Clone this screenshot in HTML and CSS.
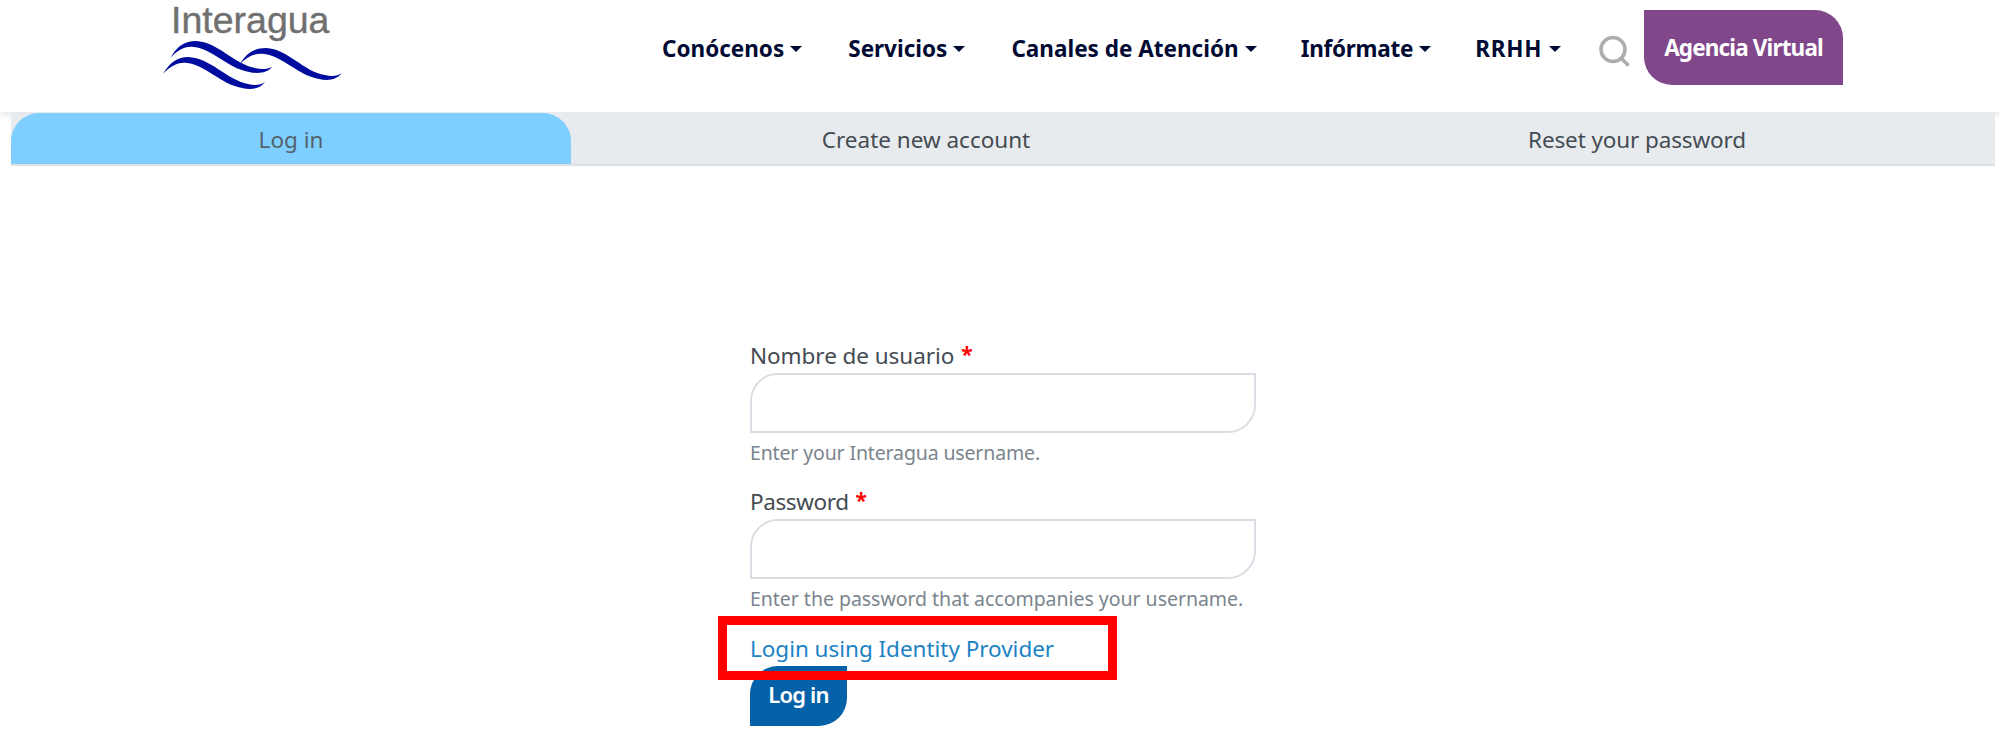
FILE: index.html
```
<!DOCTYPE html>
<html lang="es"><head><meta charset="utf-8"><title>Interagua</title><link rel="stylesheet" href="styles.css"></head>
<body>
<header class="header">
  <a class="brand" aria-label="Interagua">
    <span class="brand-name">Interagua</span>
    <svg class="waves" width="180" height="50" viewBox="0 0 180 50" fill="#000c9e">
      <path d="M7.500 17C14 5 22 0 33 0C55 1 71 23 92 27C99 29 105 28 109 26C104 32 95 33 86 31C64 27 50 8 31 6C21 5 15 9 7.500 17Z"/>
      <path d="M0 33C7 21 15 16 25 16C48 17 64 39 85 43C92 45 98 44 102 41C97 48 88 49 79 47C57 43 43 24 24 22C14 21 8 25 0 33Z"/>
      <path d="M77 23C84 11 92 7 103 7C125 8 141 31 162 34C169 36 175 35 178.500 32C174 39 165 40 156 38C134 34 120 15 101 13C91 12 84 16 77 23Z"/>
    </svg>
  </a>
  <nav class="nav">
    <a class="nav-item"><span>Conócenos</span></a>
    <a class="nav-item"><span>Servicios</span></a>
    <a class="nav-item"><span>Canales de Atención</span></a>
    <a class="nav-item informate"><span>Infórmate</span></a>
    <a class="nav-item rrhh"><span>RRHH</span></a>
  </nav>
  <svg class="search" width="32" height="32" viewBox="0 0 32 32" fill="none" stroke="#adadad" stroke-width="3.600" stroke-linecap="round"><circle cx="14" cy="14.500" r="12"/><path d="M22.500 23.500L28.500 29.500"/></svg>
  <a class="agency"><span>Agencia Virtual</span></a>
</header>
<nav class="tabs">
  <a class="tab active"><span>Log in</span></a>
  <a class="tab create"><span>Create new account</span></a>
  <a class="tab reset"><span>Reset your password</span></a>
</nav>
<main>
  <form class="form">
    <label class="label" for="user"><span>Nombre de usuario</span><b class="required">*</b></label>
    <input class="field" id="user" type="text">
    <p class="help user-help"><span>Enter your Interagua username.</span></p>
    <label class="label password" for="pass"><span>Password</span><b class="required">*</b></label>
    <input class="field" id="pass" type="password">
    <p class="help"><span>Enter the password that accompanies your username.</span></p>
    <div class="provider"><a><span>Login using Identity Provider</span></a><div class="highlight"></div></div>
    <button class="submit" type="button"><span>Log in</span></button>
  </form>
</main>
</body></html>
```
FILE: styles.css
```
* { box-sizing: border-box; }
body { margin: 0; height: 754px; overflow: hidden; background: #fff; font-family: "Noto Sans", sans-serif; font-size: 22.5px; color: #444b52; }
.header { height: 112px; display: flex; align-items: flex-start; padding-left: 163px; box-shadow: 0 2px 8px rgba(0,0,0,.12); }
.brand { width: 499px; display: flex; flex-direction: column; }
.brand-name { font: 37.5px/41px "Liberation Sans", sans-serif; color: #707070; padding-left: 8px; -webkit-text-stroke: .4px #707070; }
.waves { display: block; }
.nav { display: flex; gap: 46px; padding-top: 33px; width: 900px; }
.nav-item { display: flex; align-items: center; gap: 6px; height: 31px; line-height: 31px; font-weight: 700; color: #000a33; white-space: nowrap; }
.nav-item::after { content: ""; border: 6px solid transparent; border-top: 6px solid #000a33; border-bottom: 0; }
.informate { margin-left: -2px; letter-spacing: -.25px; }
.rrhh { margin-left: -2px; letter-spacing: .8px; gap: 7px; }
.search { margin: 35px 13px 0 37px; flex: none; }
.agency { width: 199px; height: 75px; margin-top: 10px; border-radius: 0 28px 0 28px; background: #80478b; color: #fff; font-weight: 700; letter-spacing: -.85px; text-align: center; line-height: 76px; white-space: nowrap; }
.tabs { position: relative; margin: 0 5px 0 11px; height: 54px; background: #e7ebee; display: flex; border-bottom: 2px solid #dee2e6; }
.tab { text-align: center; line-height: 56px; }
.active { width: 560px; height: 51px; margin-top: 1px; background: #7ecfff; border-radius: 28px 28px 0 0; color: #54626e; line-height: 54px; }
.create { width: 710px; }
.reset { flex: 1; letter-spacing: -.12px; padding-right: 2px; }
.form { width: 506px; margin: 174px 0 0 750px; display: flex; flex-direction: column; align-items: flex-start; }
.label { height: 33px; line-height: 32px; display: flex; gap: 7px; letter-spacing: -.06px; }
.password { letter-spacing: -.4px; }
.required { color: #f00; line-height: 29px; font-size: 21px; }
.field { width: 506px; height: 60px; border: 2px solid #d8dee3; border-radius: 28px 0 28px 0; background: #fff; }
.help { margin: 0; height: 53px; line-height: 40px; font-size: 19.5px; letter-spacing: -.03px; color: #7b858e; white-space: nowrap; }
.user-help { letter-spacing: -.14px; }
.provider { position: relative; height: 34px; line-height: 34px; letter-spacing: -.03px; color: #1b82c5; }
.highlight { position: absolute; left: -32px; top: -16px; width: 399px; height: 64px; border: 9px solid #f00; }
.submit { width: 97px; height: 60px; border: 0; background: #0562a8; color: #fff; font: 600 22px "Noto Sans", sans-serif; letter-spacing: -.8px; border-radius: 28px 0 28px 0; padding: 0 0 4px; }
```
